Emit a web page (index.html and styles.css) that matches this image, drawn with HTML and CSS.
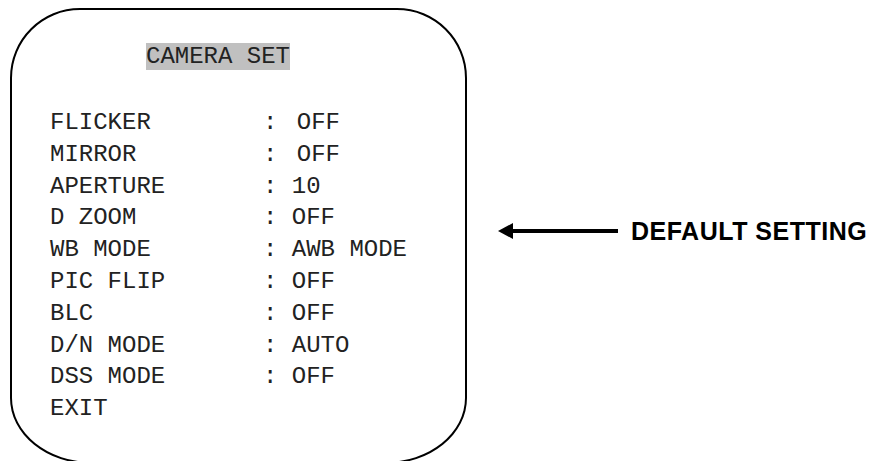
FILE: index.html
```html
<!DOCTYPE html>
<html lang="en">
<head>
    <meta charset="UTF-8">
    <meta name="viewport" content="width=device-width, initial-scale=1.0">
    <title>Camera Set - Default Setting</title>
    <link rel="stylesheet" href="styles.css">
</head>
<body>
    <div class="page">
        <div class="osd">
            <div class="osd-title"><span class="hl">CAMERA SET</span></div>
            <div class="menu">
                <div class="row"><span class="key">FLICKER</span><span class="sep">:</span><span class="val nudge">OFF</span></div>
                <div class="row"><span class="key">MIRROR</span><span class="sep">:</span><span class="val nudge">OFF</span></div>
                <div class="row"><span class="key">APERTURE</span><span class="sep">:</span><span class="val">10</span></div>
                <div class="row"><span class="key">D ZOOM</span><span class="sep">:</span><span class="val">OFF</span></div>
                <div class="row"><span class="key">WB MODE</span><span class="sep">:</span><span class="val">AWB MODE</span></div>
                <div class="row"><span class="key">PIC FLIP</span><span class="sep">:</span><span class="val">OFF</span></div>
                <div class="row"><span class="key">BLC</span><span class="sep">:</span><span class="val">OFF</span></div>
                <div class="row"><span class="key">D/N MODE</span><span class="sep">:</span><span class="val">AUTO</span></div>
                <div class="row"><span class="key">DSS MODE</span><span class="sep">:</span><span class="val">OFF</span></div>
                <div class="row"><span class="key">EXIT</span></div>
            </div>
        </div>

        <div class="callout">
            <svg class="arrow" width="120" height="18" viewBox="0 0 120 18">
                <polygon points="0,9 15,1 15,17" fill="#000"/>
                <rect x="14" y="7" width="106" height="4" fill="#000"/>
            </svg>
            <span class="callout-text">DEFAULT SETTING</span>
        </div>
    </div>
</body>
</html>
```

FILE: styles.css
```css
html, body {
    margin: 0;
    padding: 0;
    background-color: #fff;
    overflow: hidden;
}

.page {
    display: flex;
    align-items: flex-start;
    height: 461px;
}

/* kotak menu OSD */
.osd {
    box-sizing: border-box;
    width: 457px;
    height: 456px;
    margin-top: 8px;
    margin-left: 10px;
    padding-top: 31px;
    border: 2px solid #000;
    border-radius: 70px 70px 82px 82px / 70px 70px 66px 66px;
    font-family: "Liberation Mono", "Courier New", monospace;
    font-size: 24px;
    color: #222;
    flex-shrink: 0;
}

.osd-title {
    padding-left: 134px;
    line-height: 32px;
    white-space: pre;
}

.hl {
    background-color: #c0c0c0;
}

.menu {
    margin-top: 34px;
    padding-left: 38px;
}

.row {
    display: flex;
    line-height: 31.8px;
    white-space: pre;
}

.key {
    width: 213px;
}

.sep {
    width: 28.8px;
}

.val.nudge {
    padding-left: 5px;
}

/* panah + keterangan */
.callout {
    display: flex;
    align-items: center;
    height: 30px;
    margin-top: 216px;
    margin-left: 31px;
}

.arrow {
    display: block;
}

.callout-text {
    margin-left: 13px;
    font-family: "Liberation Sans", Arial, sans-serif;
    font-weight: bold;
    font-size: 25px;
    letter-spacing: 0.5px;
    line-height: 30px;
    color: #000;
    white-space: nowrap;
}
```
